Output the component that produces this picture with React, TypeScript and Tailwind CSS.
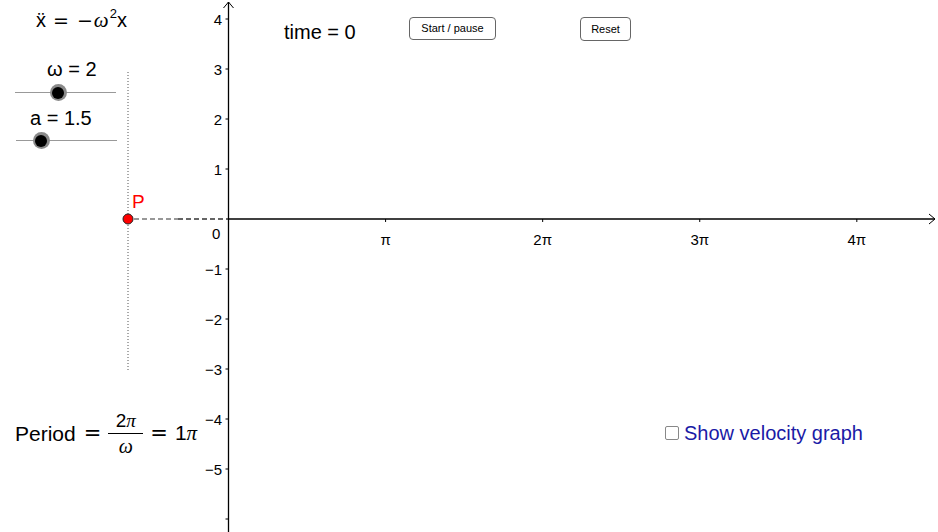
import React from "react";

const ORIGIN_X = 228.5;
const ORIGIN_Y = 219;
const UNIT = 50;

const yTicks = [4, 3, 2, 1, -1, -2, -3, -4, -5, -6];
const xTicks = [1, 2, 3, 4];

function Graph() {
  return (
    <svg className="absolute inset-0" width={938} height={532} viewBox="0 0 938 532">
      {/* dotted trace of P */}
      <line x1={128} y1={72} x2={128} y2={370} stroke="#555" strokeWidth={1} strokeDasharray="1 2" />
      {/* dashed link from P to y-axis */}
      <line x1={134} y1={ORIGIN_Y} x2={178} y2={ORIGIN_Y} stroke="#777" strokeWidth={1.4} strokeDasharray="5 3" />
      <line x1={178} y1={ORIGIN_Y} x2={ORIGIN_X} y2={ORIGIN_Y} stroke="#333" strokeWidth={1.4} strokeDasharray="5 3" />

      {/* axes */}
      <line x1={ORIGIN_X} y1={2} x2={ORIGIN_X} y2={532} stroke="#000" strokeWidth={1.3} />
      <path d={`M${ORIGIN_X - 5} 8 L${ORIGIN_X} 2 L${ORIGIN_X + 5} 8`} fill="none" stroke="#000" strokeWidth={1} />
      <line x1={ORIGIN_X} y1={ORIGIN_Y} x2={935} y2={ORIGIN_Y} stroke="#000" strokeWidth={1.3} />
      <path d={`M929 ${ORIGIN_Y - 5} L935 ${ORIGIN_Y} L929 ${ORIGIN_Y + 5}`} fill="none" stroke="#000" strokeWidth={1} />

      {yTicks.map((k) => {
        const y = ORIGIN_Y - k * UNIT;
        return (
          <g key={k}>
            <line x1={ORIGIN_X - 3} y1={y} x2={ORIGIN_X} y2={y} stroke="#000" strokeWidth={1} />
            {k > -6 && (
              <text
                x={222}
                y={y + 6}
                textAnchor="end"
                fontSize={15}
                fontFamily="'Liberation Sans', Arial, sans-serif"
                fill="#000"
              >
                {k < 0 ? `\u2212${-k}` : k}
              </text>
            )}
          </g>
        );
      })}

      {xTicks.map((k) => {
        const x = ORIGIN_X + k * Math.PI * UNIT;
        return (
          <g key={k}>
            <line x1={x} y1={ORIGIN_Y} x2={x} y2={ORIGIN_Y + 3} stroke="#000" strokeWidth={1} />
            <text
              x={x}
              y={245}
              textAnchor="middle"
              fontSize={15}
              fontFamily="'Liberation Sans', Arial, sans-serif"
              fill="#000"
            >
              {k === 1 ? "π" : `${k}π`}
            </text>
          </g>
        );
      })}
      <text x={212} y={239} fontSize={15} fontFamily="'Liberation Sans', Arial, sans-serif" fill="#000">
        0
      </text>

      {/* point P */}
      <circle cx={128} cy={ORIGIN_Y} r={5} fill="#ff0000" stroke="#222" strokeWidth={1} />
      <text x={132} y={208} fontSize={19} fontFamily="'Liberation Sans', Arial, sans-serif" fill="#ff0000">
        P
      </text>
    </svg>
  );
}

function Slider({ left, top, width, knob }: { left: number; top: number; width: number; knob: number }) {
  return (
    <div className="absolute" style={{ left, top, width }}>
      <div className="h-px bg-[#999]" />
      <div
        className="absolute -top-[8px] w-[17px] h-[17px] rounded-full bg-[#8a8a8a] flex items-center justify-center"
        style={{ left: knob - 8.5 }}
      >
        <div className="w-[12px] h-[12px] rounded-full bg-black" />
      </div>
    </div>
  );
}

export default function App() {
  return (
    <div className="relative w-[938px] h-[532px] bg-white overflow-hidden font-['Liberation_Sans',Arial,sans-serif] text-black">
      <Graph />

      {/* equation of motion */}
      <div className="absolute left-[36px] top-[10px] text-[20px] leading-none flex items-baseline">
        <span>ẍ</span>
        <span className="font-['DejaVu_Sans',sans-serif] text-[19px] ml-[7px] mr-[8px]">=</span>
        <span className="font-['DejaVu_Sans',sans-serif] text-[19px]">−</span>
        <span className="font-['Liberation_Serif',serif] italic text-[21px] ml-[1px]">ω</span>
        <span className="text-[13px] relative -top-[9px] ml-[1px]">2</span>
        <span>x</span>
      </div>

      {/* sliders */}
      <div className="absolute left-[47px] top-[59px] text-[20px] leading-none">ω = 2</div>
      <Slider left={15} top={92} width={101} knob={43} />
      <div className="absolute left-[30px] top-[108px] text-[20px] leading-none">a = 1.5</div>
      <Slider left={16} top={140} width={101} knob={25} />

      {/* controls */}
      <div className="absolute left-[284px] top-[22px] text-[20px] leading-none">time = 0</div>
      <button className="absolute left-[409px] top-[17px] w-[87px] h-[23px] rounded-[4px] border-[1.5px] border-[#666] bg-white text-[11px] leading-none">
        Start / pause
      </button>
      <button className="absolute left-[580px] top-[17px] w-[51px] h-[24px] rounded-[4px] border-[1.5px] border-[#666] bg-white text-[11px] leading-none">
        Reset
      </button>

      {/* period formula */}
      <div className="absolute left-[15px] top-[411px] flex items-center text-[21px]">
        <span>Period</span>
        <span className="font-['DejaVu_Sans',sans-serif] ml-[8px] mr-[7px]">=</span>
        <span className="flex flex-col items-center leading-none">
          <span className="text-[19px] pb-[3px]">
            2<span className="font-['Liberation_Serif',serif] italic">π</span>
          </span>
          <span className="w-[35px] h-px bg-black" />
          <span className="font-['Liberation_Serif',serif] italic text-[20px] pt-[2px]">ω</span>
        </span>
        <span className="font-['DejaVu_Sans',sans-serif] ml-[7px] mr-[7px]">=</span>
        <span>
          1<span className="font-['Liberation_Serif',serif] italic">π</span>
        </span>
      </div>

      {/* velocity checkbox */}
      <label className="absolute left-[665px] top-[423px] flex items-center gap-[5px] text-[20px] leading-none text-[#1a1aa6]">
        <span className="w-[14px] h-[14px] rounded-[2px] border border-[#888] bg-white" />
        <span>Show velocity graph</span>
      </label>
    </div>
  );
}
